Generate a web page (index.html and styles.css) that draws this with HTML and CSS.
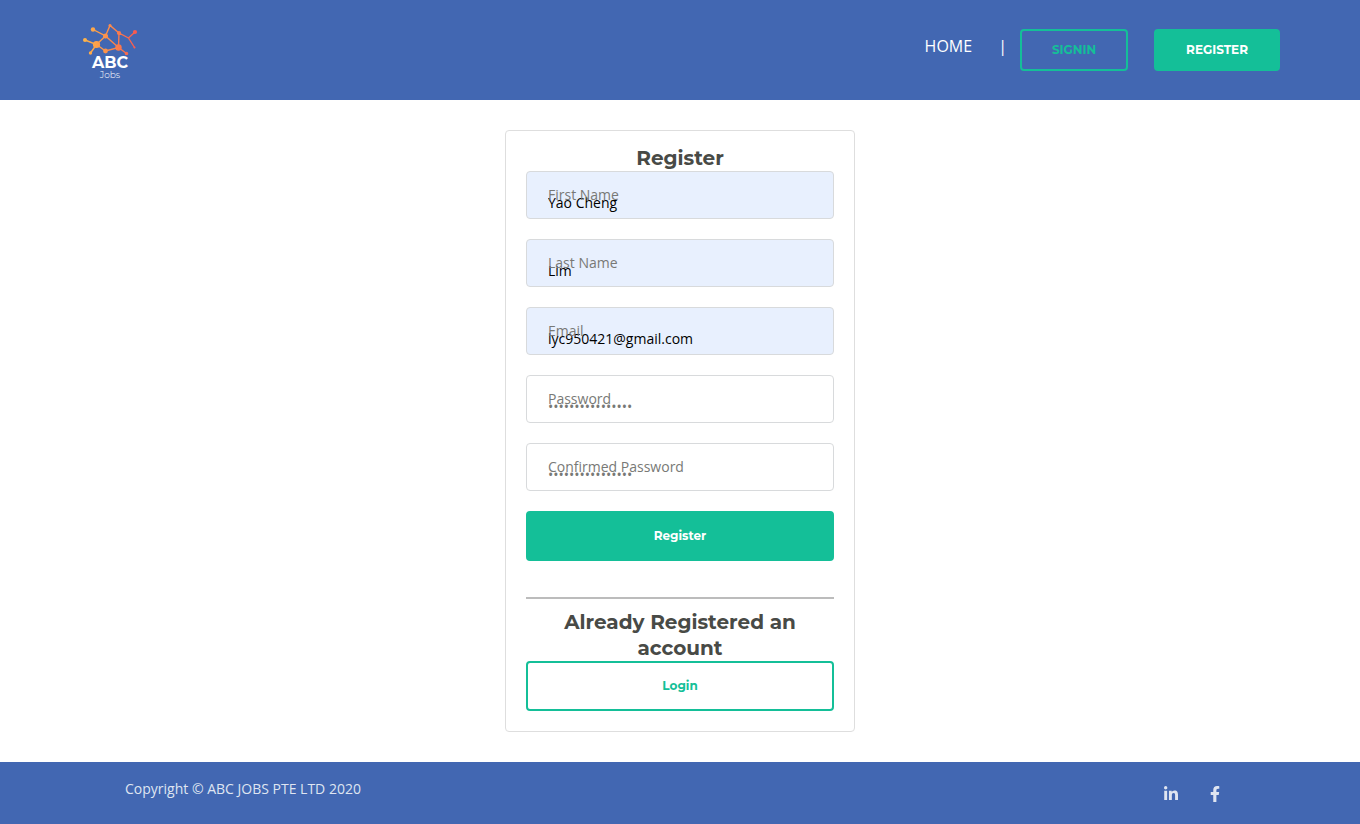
FILE: index.html
```html
<!DOCTYPE html>
<html lang="en">
<head>
<meta charset="utf-8">
<meta name="viewport" content="width=device-width, initial-scale=1">
<title>ABC Jobs - Register</title>
<link rel="stylesheet" href="styles.css">
</head>
<body>
<header class="navbar">
  <a class="logo" href="#" aria-label="ABC Jobs">
    <svg class="logo-mark" viewBox="0 0 60 32" aria-hidden="true">
      <defs>
        <linearGradient id="warm" gradientUnits="userSpaceOnUse" x1="3" y1="0" x2="57" y2="0">
          <stop offset="0" stop-color="#ffb648"/>
          <stop offset=".5" stop-color="#fb8b4b"/>
          <stop offset="1" stop-color="#f9564f"/>
        </linearGradient>
      </defs>
      <g fill="none" stroke="url(#warm)" stroke-width="1.4" stroke-linecap="round">
        <path d="M5 17 16.500 21.500 10.500 30M16.500 21.500 25.500 13 13 6.500M25.500 13 30 2.500 39 10 38.500 24.500 25.500 13M16.500 21.500 25.500 28 38.500 24.500 46.500 30.500M39 10 48.500 15 55 9M48.500 15 54.500 24.500"/>
      </g>
      <g fill="url(#warm)">
        <circle cx="5" cy="17" r="2"/><circle cx="13" cy="6.500" r="2.200"/><circle cx="16.500" cy="21.500" r="3.600"/><circle cx="10.500" cy="30" r="1.700"/><circle cx="25.500" cy="13" r="2.500"/><circle cx="30" cy="2.500" r="1.500"/><circle cx="25.500" cy="28" r="2.400"/><circle cx="39" cy="10" r="2.100"/><circle cx="38.500" cy="24.500" r="3.200"/><circle cx="46.500" cy="30.500" r="1.700"/><circle cx="55" cy="9" r="2.100"/><circle cx="54.500" cy="24.500" r="1"/>
      </g>
    </svg>
    <span class="logo-name">ABC</span>
    <span class="logo-sub">Jobs</span>
  </a>
  <nav class="nav">
    <a class="nav-home" href="#">HOME</a>
    <span class="nav-divider">|</span>
    <a class="nav-button nav-signin" href="#">SIGNIN</a>
    <a class="nav-button nav-register" href="#">REGISTER</a>
  </nav>
</header>
<main class="content">
  <form class="card">
    <h1 class="heading">Register</h1>
    <div class="field"><input class="input filled" id="first" type="text" value="Yao Cheng"><label class="label" for="first">First Name</label></div>
    <div class="field"><input class="input filled" id="last" type="text" value="Lim"><label class="label" for="last">Last Name</label></div>
    <div class="field"><input class="input filled" id="email" type="email" value="lyc950421@gmail.com"><label class="label" for="email">Email</label></div>
    <div class="field"><input class="input" id="password" type="password" value="aaaaaaaaaaaaaaaa"><label class="label" for="password">Password</label></div>
    <div class="field"><input class="input" id="confirm" type="password" value="aaaaaaaaaaaaaaaa"><label class="label" for="confirm">Confirmed Password</label></div>
    <button class="button primary" type="submit">Register</button>
    <hr class="rule">
    <h2 class="heading">Already Registered an account</h2>
    <button class="button outline" type="button">Login</button>
  </form>
</main>
<footer class="footer">
  <p class="copyright">Copyright © ABC JOBS PTE LTD 2020</p>
  <div class="social">
    <a class="social-link" href="#" aria-label="LinkedIn">
      <svg class="social-icon" viewBox="0 0 448 512" aria-hidden="true"><path d="M100.280 448H7.400V148.900h92.880zM53.790 108.100C24.090 108.100 0 83.500 0 53.800a53.790 53.790 0 0 1 107.580 0c0 29.700-24.100 54.300-53.790 54.300zM447.900 448h-92.680V302.400c0-34.700-.7-79.200-48.290-79.200-48.290 0-55.690 37.700-55.690 76.700V448h-92.780V148.900h89.080v40.800h1.300c12.400-23.500 42.690-48.300 87.880-48.300 94 0 111.280 61.900 111.280 142.300V448z"/></svg>
    </a>
    <a class="social-link" href="#" aria-label="Facebook">
      <svg class="social-icon" viewBox="0 0 320 512" aria-hidden="true"><path d="m279.140 288 14.220-92.660h-88.910v-60.130c0-25.350 12.420-50.060 52.240-50.060h40.420V6.260S260.430 0 225.360 0c-73.220 0-121.080 44.380-121.080 124.720v70.620H22.890V288h81.390v224h100.170V288z"/></svg>
    </a>
  </div>
</footer>
</body>
</html>
```
FILE: styles.css
```css
* { box-sizing: border-box; }

body {
  margin: 0;
  min-height: 100vh;
  display: flex;
  flex-direction: column;
  background: #fff;
  font-family: "Open Sans", sans-serif;
  font-size: 14px;
  line-height: 22px;
}

a { text-decoration: none; }

.navbar {
  display: flex;
  justify-content: space-between;
  align-items: center;
  height: 100px;
  padding: 0 80px;
  background: #4267b2;
}

.logo {
  display: flex;
  flex-direction: column;
  align-items: center;
  width: 60px;
  padding-top: 2px;
  color: #fff;
  font-family: Montserrat, Inter, sans-serif;
}

.logo-mark { width: 60px; height: 32px; }
.logo-name { font-size: 16px; font-weight: 700; line-height: 16px; }
.logo-sub { font-size: 9px; font-weight: 300; line-height: 8px; }

.nav { display: flex; align-items: center; }

.nav-home, .nav-divider {
  color: #fff;
  font-size: 16px;
  line-height: 24px;
  padding-bottom: 8px;
}

.nav-home { margin-right: 26px; }
.nav-divider { margin-right: 13px; }

.nav-button {
  padding: 10px 30px;
  border: 2px solid #14bf98;
  border-radius: 4px;
  font-family: Montserrat, Inter, sans-serif;
  font-size: 12px;
  font-weight: 700;
  line-height: 18px;
}

.nav-signin { color: #14bf98; margin-right: 26px; }
.nav-register { color: #fff; background: #14bf98; }

.content {
  flex: 1;
  padding: 30px 20px;
}

.card {
  max-width: 350px;
  margin: 0 auto;
  padding: 14px 20px 20px;
  border: 1px solid #dedede;
  border-radius: 4px;
}

.heading {
  margin: 0;
  color: #484a46;
  font-family: Montserrat, Inter, sans-serif;
  font-size: 20px;
  font-weight: 700;
  line-height: 26px;
  text-align: center;
}

.field { position: relative; margin-bottom: 20px; }

.input {
  display: block;
  width: 100%;
  height: 48px;
  padding: 14px 21px 0;
  border: 1px solid #d8dadc;
  border-radius: 4px;
  background: #fff;
  color: #787976;
  font: 14px/20px "Open Sans", sans-serif;
}

.input.filled { background: #e8f0fe; color: #000; }

.label {
  position: absolute;
  top: 13px;
  left: 22px;
  color: #787976;
  pointer-events: none;
}

.button {
  display: block;
  width: 100%;
  height: 50px;
  border: 2px solid #14bf98;
  border-radius: 4px;
  font: 700 12px/18px Montserrat, Inter, sans-serif;
}

.primary { background: #14bf98; color: #fff; }
.outline { background: #fff; color: #14bf98; }

.rule {
  height: 2px;
  margin: 36px 0 10px;
  border: 0;
  background: #bcbcbc;
}

.footer {
  display: flex;
  justify-content: space-between;
  min-height: 62px;
  padding: 16px 140px 14px 125px;
  background: #4267b2;
  color: #dfe5f1;
}

.copyright { margin: 0; }

.social { display: flex; align-items: center; gap: 32px; }
.social-link { display: flex; color: #dfe5f1; }
.social-icon { height: 16px; fill: currentColor; }
```
